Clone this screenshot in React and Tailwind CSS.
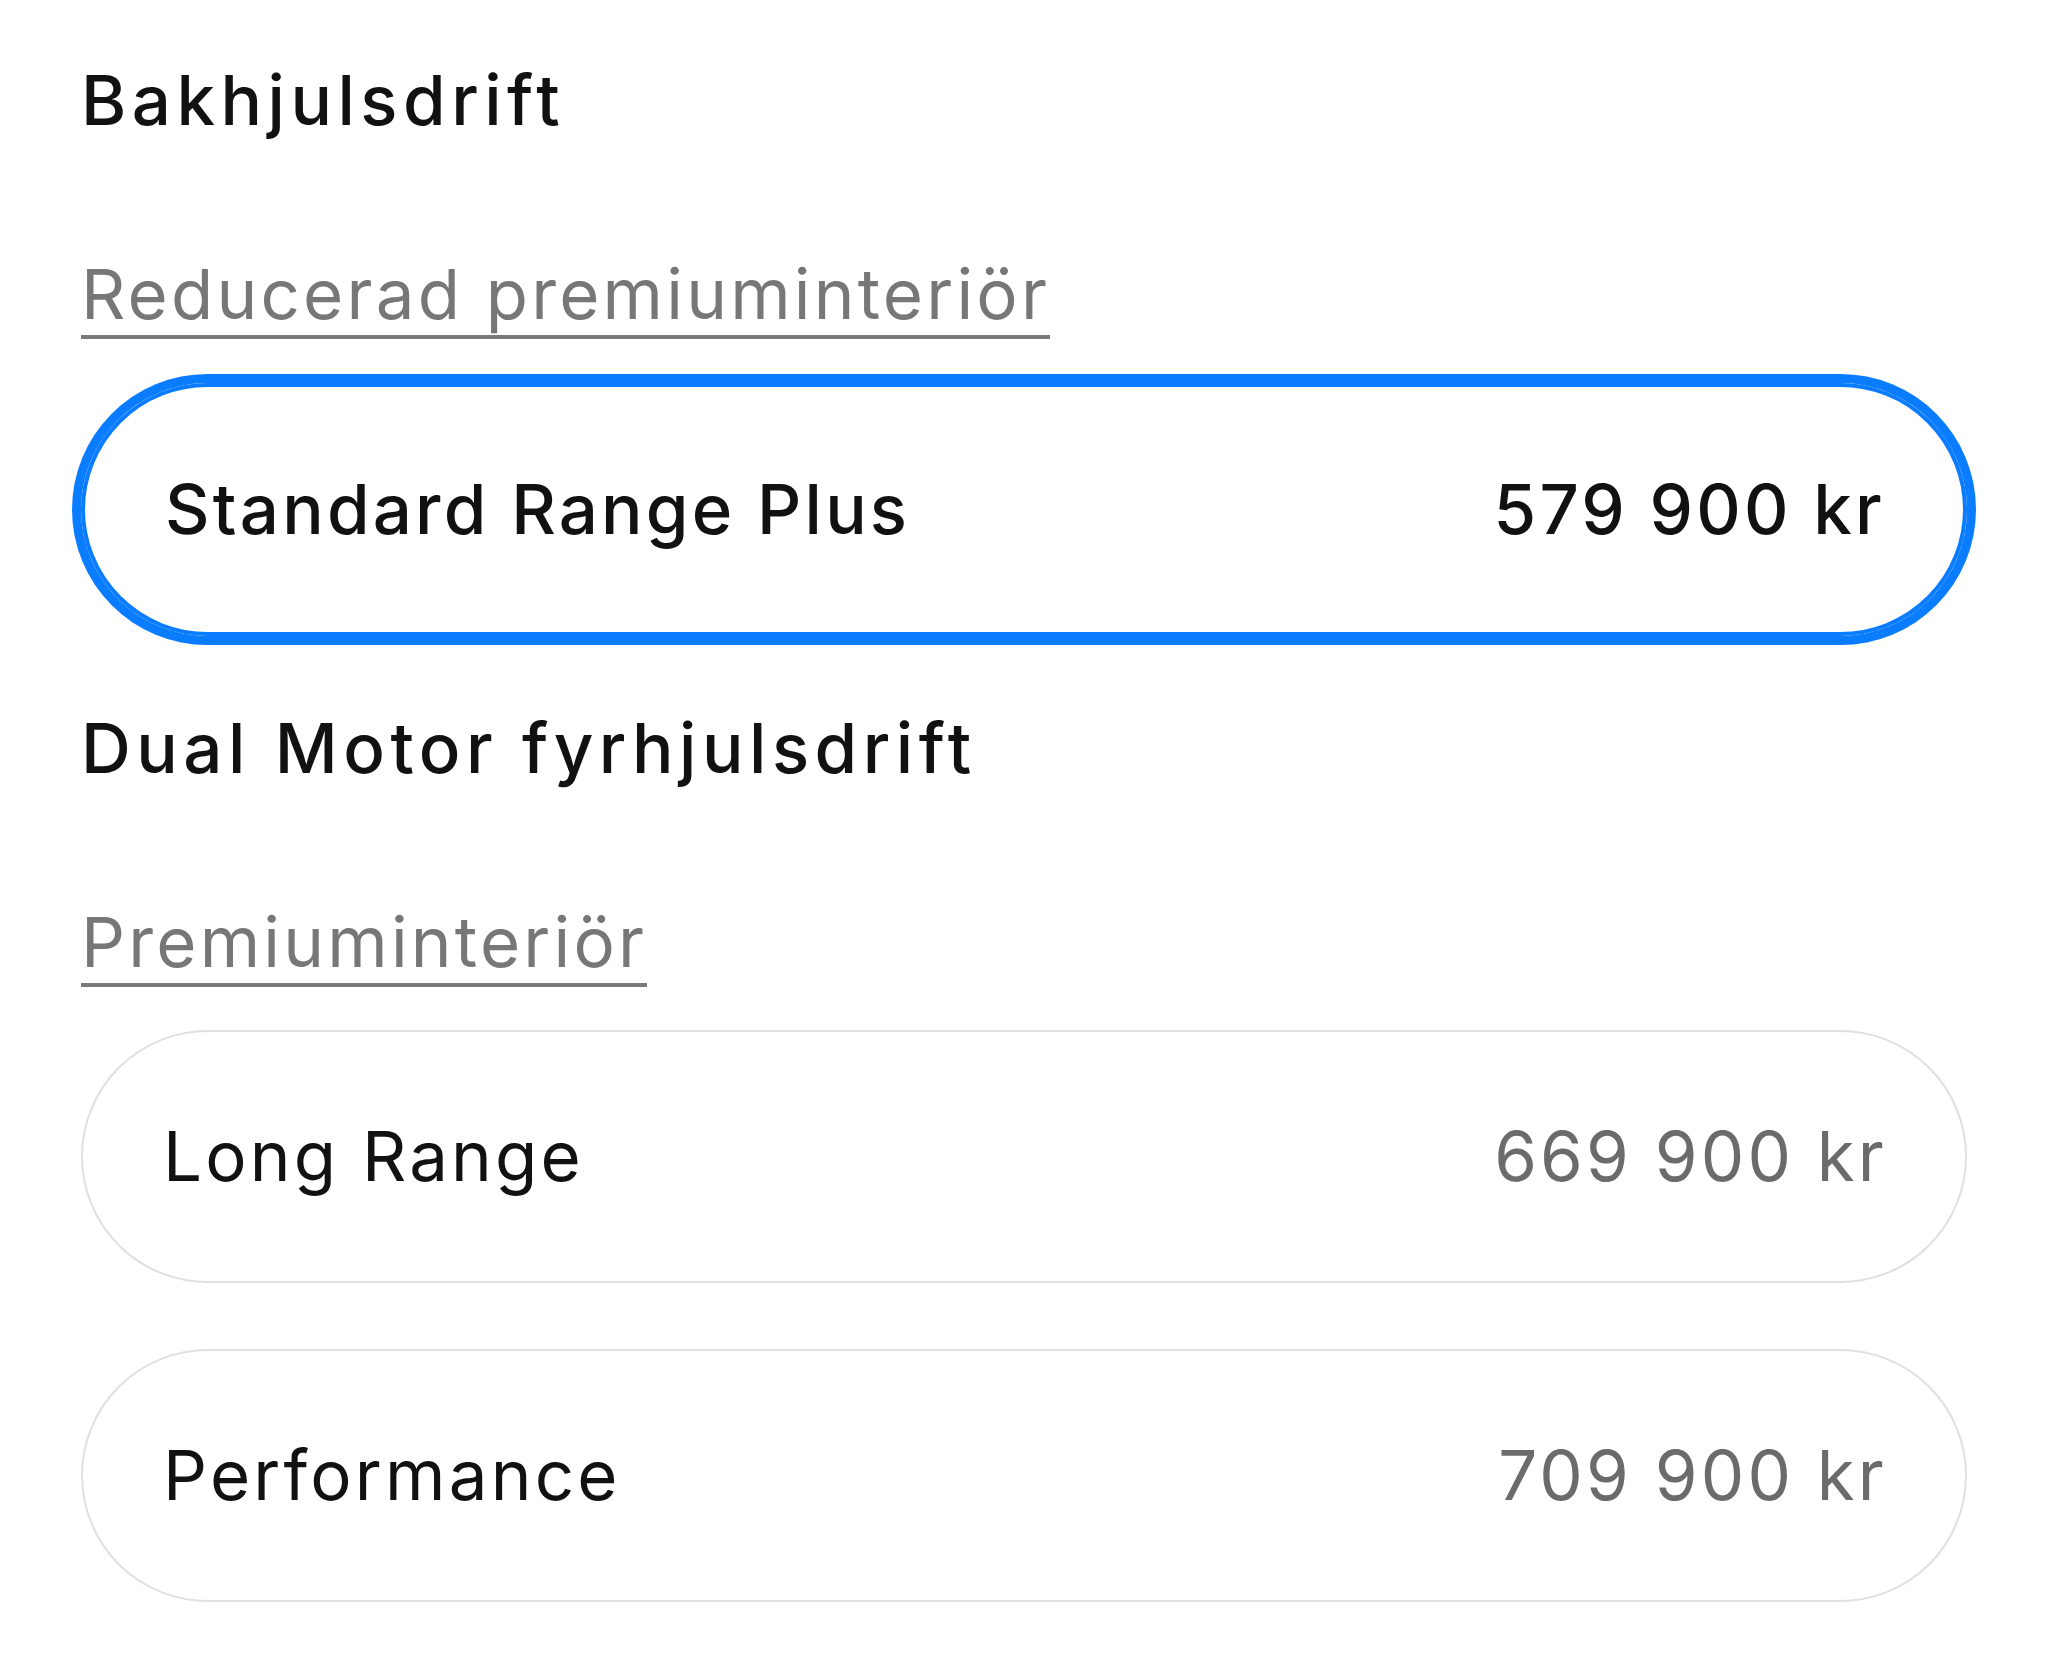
import React, { useState } from 'react';

const groups = [
  {
    title: 'Bakhjulsdrift',
    interior: 'Reducerad premiuminteriör',
    trims: [{ id: 'srp', name: 'Standard Range Plus', price: '579 900 kr' }],
  },
  {
    title: 'Dual Motor fyrhjulsdrift',
    interior: 'Premiuminteriör',
    trims: [
      { id: 'lr', name: 'Long Range', price: '669 900 kr' },
      { id: 'p', name: 'Performance', price: '709 900 kr' },
    ],
  },
];

const TrimOption = ({ trim, selected, onSelect }) => (
  <div
    onClick={onSelect}
    className={`flex h-[253px] items-center justify-between rounded-full border-2 pl-[80px] pr-[78px] cursor-pointer ${
      selected
        ? 'border-[4px] border-[#0a7cff] shadow-[0_0_0_9px_#0a7cff] font-medium'
        : 'border-[#e0e0e0]'
    }`}
  >
    <span className="text-[#111111] leading-none">{trim.name}</span>
    <span className={`leading-none ${selected ? 'text-[#111111]' : 'text-[#6b6b6b]'}`}>{trim.price}</span>
  </div>
);

export default function App() {
  const [selected, setSelected] = useState('srp');

  return (
    <div
      className="min-h-screen bg-white px-[81px] pt-[66px] text-[69px] tracking-[3.2px]"
      style={{ fontFamily: 'Inter, "Liberation Sans", sans-serif' }}
    >
      {groups.map((g, gi) => (
        <section key={g.title} className={gi > 0 ? 'mt-[78px]' : ''}>
          <h2 className="font-medium leading-none tracking-[5.5px] text-[#111111]">{g.title}</h2>
          <div className="mt-[108px]">
            <span className="inline-block border-b-4 border-[#7a7a7a] pb-[6px] leading-none text-[#777777]">
              {g.interior}
            </span>
          </div>
          <div className="mt-[36px] flex flex-col gap-[66px]">
            {g.trims.map(t => (
              <TrimOption
                key={t.id}
                trim={t}
                selected={selected === t.id}
                onSelect={() => setSelected(t.id)}
              />
            ))}
          </div>
        </section>
      ))}
    </div>
  );
}
